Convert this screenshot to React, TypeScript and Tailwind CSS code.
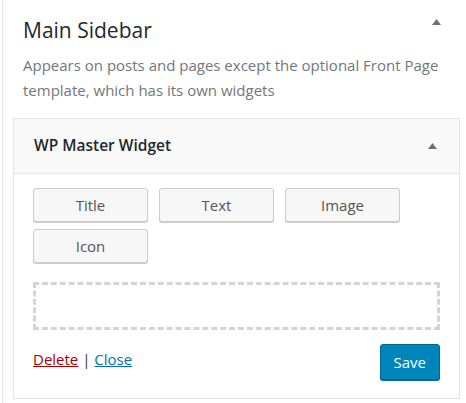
import React from "react";

function Caret() {
  return (
    <svg width="9" height="6" viewBox="0 0 9 6" className="block">
      <path d="M0 6 L4.5 0 L9 6 Z" fill="#6d7277" />
    </svg>
  );
}

function PartButton({ label }: { label: string }) {
  return (
    <button
      type="button"
      className="h-[34px] w-[115px] rounded-[3px] border border-[#cccccc] bg-[#f7f7f7] text-[15px] text-[#555555] shadow-[0_1px_0_#cccccc]"
    >
      {label}
    </button>
  );
}

export default function App() {
  return (
    <div
      className="h-[403px] w-[466px] overflow-hidden bg-white pl-[2px]"
      style={{ fontFamily: '"Open Sans", "Noto Sans", sans-serif' }}
    >
      <div className="h-full border-l border-[#e5e5e5] pr-[6px]">
        <div className="flex items-start justify-between pl-[20px] pr-[19px] pt-[15px]">
          <h2 className="text-[21px] leading-[30px] text-[#23282d]">Main Sidebar</h2>
          <div className="pt-[4px]">
            <Caret />
          </div>
        </div>
        <p className="pl-[20px] pr-[10px] pt-[8px] text-[15px] leading-[25px] text-[#72777c]">
          Appears on posts and pages except the optional Front Page template, which has its own widgets
        </p>

        <div className="ml-[10px] mt-[15px] border border-[#e5e5e5]">
          <div className="flex h-[55px] items-center justify-between border-b border-[#e5e5e5] bg-[#f9f9f9] pl-[20px] pr-[22px]">
            <span className="text-[15.5px] font-semibold text-[#23282d]">WP Master Widget</span>
            <Caret />
          </div>
          <div className="px-[19px] pb-[18px] pt-[14px]">
            <div className="flex flex-wrap gap-x-[11px] gap-y-[7px] pr-[40px]">
              <PartButton label="Title" />
              <PartButton label="Text" />
              <PartButton label="Image" />
              <PartButton label="Icon" />
            </div>
            <div className="mt-[19px] h-[48px] border-[3px] border-dashed border-[#d4d4d4]" />
            <div className="mt-[14px] flex items-start justify-between">
              <div className="pt-[5px] text-[15px] leading-[20px] text-[#32373c]">
                <a href="#" className="text-[#a00] underline">Delete</a>
                <span> | </span>
                <a href="#" className="text-[#0073aa] underline">Close</a>
              </div>
              <button
                type="button"
                className="h-[36px] rounded-[3px] border border-[#006799] bg-[#0085ba] px-[13px] text-[15px] text-white shadow-[0_1px_0_#006799]"
              >
                Save
              </button>
            </div>
          </div>
        </div>
      </div>
    </div>
  );
}
